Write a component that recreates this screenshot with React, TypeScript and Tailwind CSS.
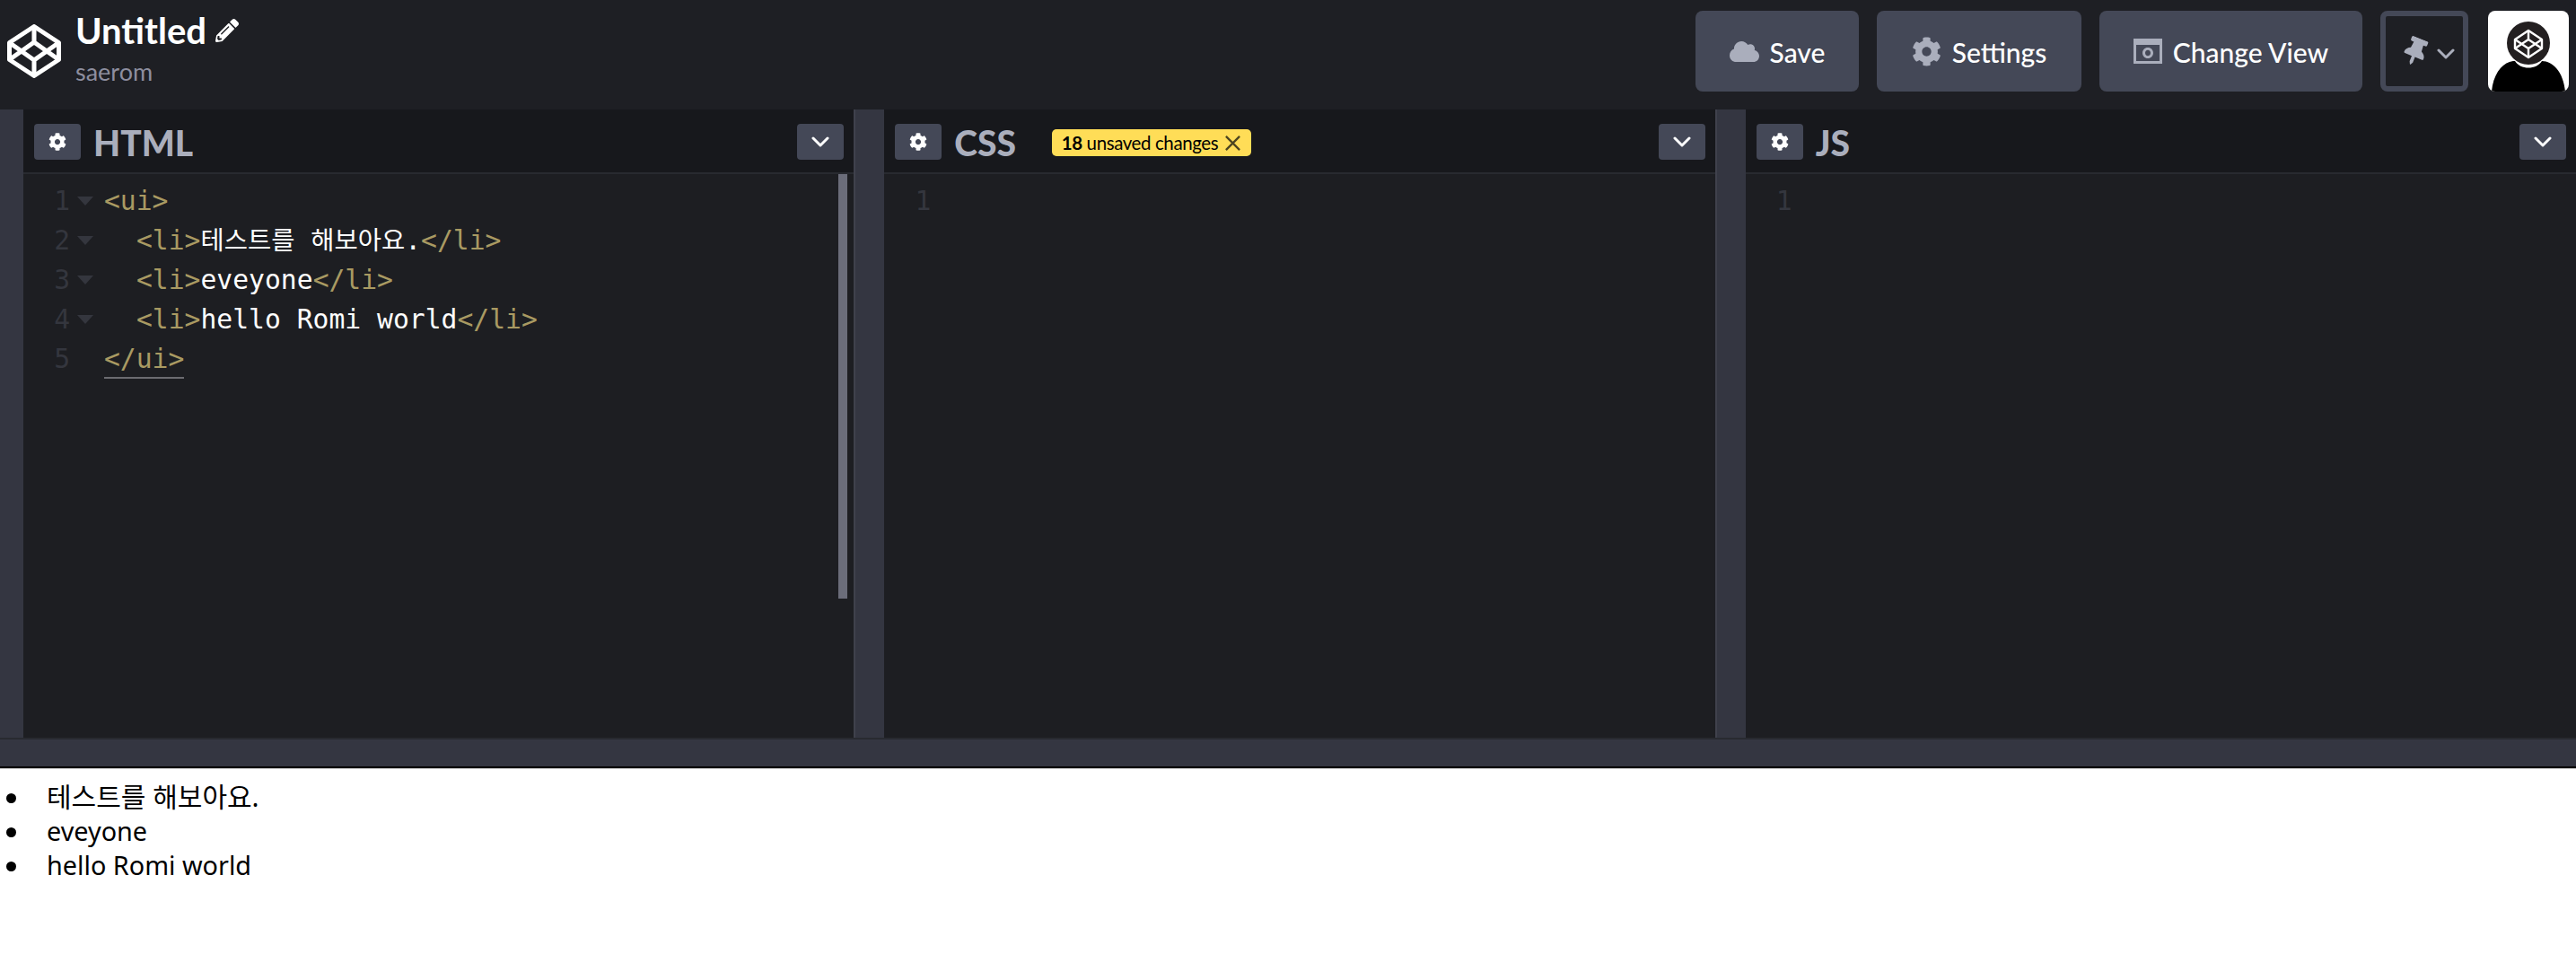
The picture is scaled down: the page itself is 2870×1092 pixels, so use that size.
import React from "react";
import { FaCog, FaCloud, FaThumbtack, FaPencilAlt } from "react-icons/fa";

const mono = "font-['DejaVu_Sans_Mono','Noto_Sans_CJK_KR',monospace]";

function PenLogo({ className, color = "#fff" }: { className?: string; color?: string }) {
    return (
        <svg viewBox="0 0 60 60" className={className} fill="none" stroke={color} strokeWidth="5" strokeLinejoin="round">
            <path d="M30 2.500 L57.500 20.500 V39.500 L30 57.500 L2.500 39.500 V20.500 Z" />
            <path d="M30 2.500 V20 M30 40 V57.500 M2.500 20.500 L30 40 L57.500 20.500 M2.500 39.500 L30 20 L57.500 39.500" />
        </svg>
    );
}

function Chevron({ className, color = "#fff" }: { className?: string; color?: string }) {
    return (
        <svg viewBox="0 0 20 12" className={className} fill="none" stroke={color} strokeWidth="3" strokeLinecap="round" strokeLinejoin="round">
            <path d="M2 2 L10 10 L18 2" />
        </svg>
    );
}

function ViewIcon() {
    return (
        <svg viewBox="0 0 32 28" className="w-[32px] h-[28px]">
            <path fill="#aaaebc" fillRule="evenodd" d="M0 0H32V28H0Z M3 7V25H29V7Z" />
            <path fill="#aaaebc" fillRule="evenodd" d="M16 10c-3.500 0-6 2.700-6 6s2.500 6 6 6 6-2.700 6-6-2.500-6-6-6Zm0 2.800c1.800 0 3 1.400 3 3.200s-1.200 3.200-3 3.200-3-1.400-3-3.200 1.200-3.200 3-3.200Z" />
        </svg>
    );
}

function TopButton({ icon, label, className }: { icon: React.ReactNode; label: string; className: string }) {
    return (
        <div className={"h-[90px] rounded-[8px] bg-[#444857] flex items-center justify-center gap-[12px] text-white text-[30px] font-medium font-['Lato',sans-serif] " + className}>
            {icon}
            <span className="mt-[2px]">{label}</span>
        </div>
    );
}

function Gutter({ n, fold }: { n: number; fold?: boolean }) {
    return (
        <div className="w-[90px] shrink-0 flex items-center h-full">
            <span className="w-[52px] text-right text-[#34363e]">{n}</span>
            {fold && (
                <svg viewBox="0 0 18 10" className="w-[18px] h-[10px] ml-[8px]">
                    <path d="M0 0 H18 L9 10 Z" fill="#34363e" />
                </svg>
            )}
        </div>
    );
}

function Tag({ children }: { children: React.ReactNode }) {
    return <span className="text-[#a99a62]">{children}</span>;
}

function CodeLine({ n, fold, indent, children }: { n: number; fold?: boolean; indent?: boolean; children: React.ReactNode }) {
    return (
        <div className="flex h-[44px] items-center whitespace-pre">
            <Gutter n={n} fold={fold} />
            {indent && <span className="w-[36px] shrink-0" />}
            <div>{children}</div>
        </div>
    );
}

function Panel({ title, tool, scrollbar, children }: { title: string; tool?: React.ReactNode; scrollbar?: boolean; children: React.ReactNode }) {
    return (
        <div className="flex-1 min-w-0 flex flex-col bg-[#1d1e22]">
            <div className="h-[72px] shrink-0 pt-[2px] pl-[12px] pr-[11px] flex items-center bg-[#17181c] border-b-2 border-[#282a30]">
                <div className="w-[52px] h-[40px] rounded-[4px] bg-[#444857] flex items-center justify-center">
                    <FaCog className="text-white w-[20px] h-[20px]" />
                </div>
                <span className="ml-[14px] mt-[2px] text-[39px] leading-none font-black text-[#aaaebc] font-['Lato',sans-serif]">{title}</span>
                {tool}
                <div className="ml-auto w-[52px] h-[40px] rounded-[4px] bg-[#444857] flex items-center justify-center">
                    <Chevron className="w-[20px] h-[12px]" />
                </div>
            </div>
            <div className={"relative flex-1 pt-[8px] text-[29.7px] " + mono}>
                {children}
                {scrollbar && <div className="absolute right-[7px] top-0 w-[10px] h-[473px] bg-[#6b6d7a]" />}
            </div>
        </div>
    );
}

function Bar() {
    return <div className="w-[34px] shrink-0 bg-[#343641] border-l-2 border-[#3f414c]" />;
}

function Hangul({ children }: { children: string }) {
    return <span className="text-[28.5px] font-['Noto_Sans_CJK_KR',sans-serif]">{children}</span>;
}

export default function App() {
    return (
        <div className="w-[2870px] h-[1092px] flex flex-col bg-white overflow-hidden">
            <header className="h-[122px] shrink-0 bg-[#1e1f24] flex pt-[12px] pr-[8px]">
                <PenLogo className="w-[60px] h-[60px] ml-[8px] mt-[15px]" />
                <div className="ml-[16px] font-['Lato',sans-serif]">
                    <div className="flex items-center h-[44px]">
                        <span className="text-[40px] leading-none font-bold text-white">Untitled</span>
                        <FaPencilAlt className="ml-[10px] text-white w-[26px] h-[26px]" />
                    </div>
                    <div className="text-[27px] leading-none mt-[10px] text-[#8d8e9f]">saerom</div>
                </div>
                <div className="ml-auto flex gap-[20px] h-[90px]">
                    <TopButton className="w-[182px]" icon={<FaCloud className="text-[#aaaebc] w-[33px] h-[33px]" />} label="Save" />
                    <TopButton className="w-[228px]" icon={<FaCog className="text-[#aaaebc] w-[33px] h-[33px]" />} label="Settings" />
                    <TopButton className="w-[293px]" icon={<ViewIcon />} label="Change View" />
                    <div className="w-[98px] h-[90px] rounded-[8px] border-[6px] border-[#444857] flex items-center justify-center gap-[12px] pl-[12px]">
                        <FaThumbtack className="text-[#aaaebc] w-[24px] h-[31px] rotate-[22deg]" />
                        <Chevron className="w-[20px] h-[12px] mt-[6px]" color="#aaaebc" />
                    </div>
                    <div className="w-[90px] h-[90px] ml-[2px] rounded-[8px] bg-white overflow-hidden">
                        <svg viewBox="0 0 90 90" className="w-full h-full">
                            <path d="M4 90 C6 68 18 56 30 56 C36 66 54 66 60 56 C72 56 84 68 86 90 Z" fill="#000" />
                            <circle cx="45" cy="36" r="24" fill="#231f20" />
                            <g fill="none" stroke="#fff" strokeWidth="2.400" strokeLinejoin="round">
                                <path d="M45 22 L60 32 V42 L45 52 L30 42 V32 Z" />
                                <path d="M45 22 V32 M45 42 V52 M30 32 L45 42 L60 32 M30 42 L45 32 L60 42" />
                            </g>
                        </svg>
                    </div>
                </div>
            </header>
            <main className="h-[700px] shrink-0 flex">
                <div className="w-[26px] shrink-0 bg-[#343641]" />
                <Panel title="HTML" scrollbar>
                    <CodeLine n={1} fold><Tag>&lt;ui&gt;</Tag></CodeLine>
                    <CodeLine n={2} fold indent>
                        <Tag>&lt;li&gt;</Tag><span className="text-white"><Hangul>테스트를</Hangul> <Hangul>해보아요</Hangul>.</span><Tag>&lt;/li&gt;</Tag>
                    </CodeLine>
                    <CodeLine n={3} fold indent><Tag>&lt;li&gt;</Tag><span className="text-white">eveyone</span><Tag>&lt;/li&gt;</Tag></CodeLine>
                    <CodeLine n={4} fold indent><Tag>&lt;li&gt;</Tag><span className="text-white">hello Romi world</span><Tag>&lt;/li&gt;</Tag></CodeLine>
                    <CodeLine n={5}><span className="inline-block h-[44px] leading-[44px] border-b-2 border-[#6b6b70]"><Tag>&lt;/ui&gt;</Tag></span></CodeLine>
                </Panel>
                <Bar />
                <Panel
                    title="CSS"
                    tool={
                        <div className="ml-[40px] mt-[1px] pt-[2px] h-[30px] w-[222px] rounded-[5px] bg-[#ffdd57] flex items-center justify-center gap-[7px] text-[20.5px] tracking-[-0.4px] text-black font-['Lato',sans-serif]">
                            <span><b>18</b> unsaved changes</span>
                            <svg viewBox="0 0 20 20" className="w-[19px] h-[19px]" fill="none" stroke="#4d4520" strokeWidth="2.400"><path d="M2 2 L18 18 M18 2 L2 18" /></svg>
                        </div>
                    }
                >
                    <CodeLine n={1}>{""}</CodeLine>
                </Panel>
                <Bar />
                <Panel title="JS">
                    <CodeLine n={1}>{""}</CodeLine>
                </Panel>
            </main>
            <div className="h-[34px] shrink-0 bg-[#343641] border-t-2 border-[#282a30] border-b-2 border-b-black" />
            <div className="flex-1 border-t border-[#d0d0d0] pt-[12px] text-[28.800px] leading-[38px] text-black font-['Noto_Sans','Noto_Sans_CJK_KR',sans-serif]">
                {[["테스트를 해보아요.", true], ["eveyone", false], ["hello Romi world", false]].map(([t, ko]) => (
                    <div key={String(t)} className="flex items-center">
                        <span className="w-[11px] h-[11px] mt-[3px] rounded-full bg-black ml-[7px] mr-[34px]" />
                        <span className={ko ? "text-[30px]" : ""}>{t}</span>
                    </div>
                ))}
            </div>
        </div>
    );
}
